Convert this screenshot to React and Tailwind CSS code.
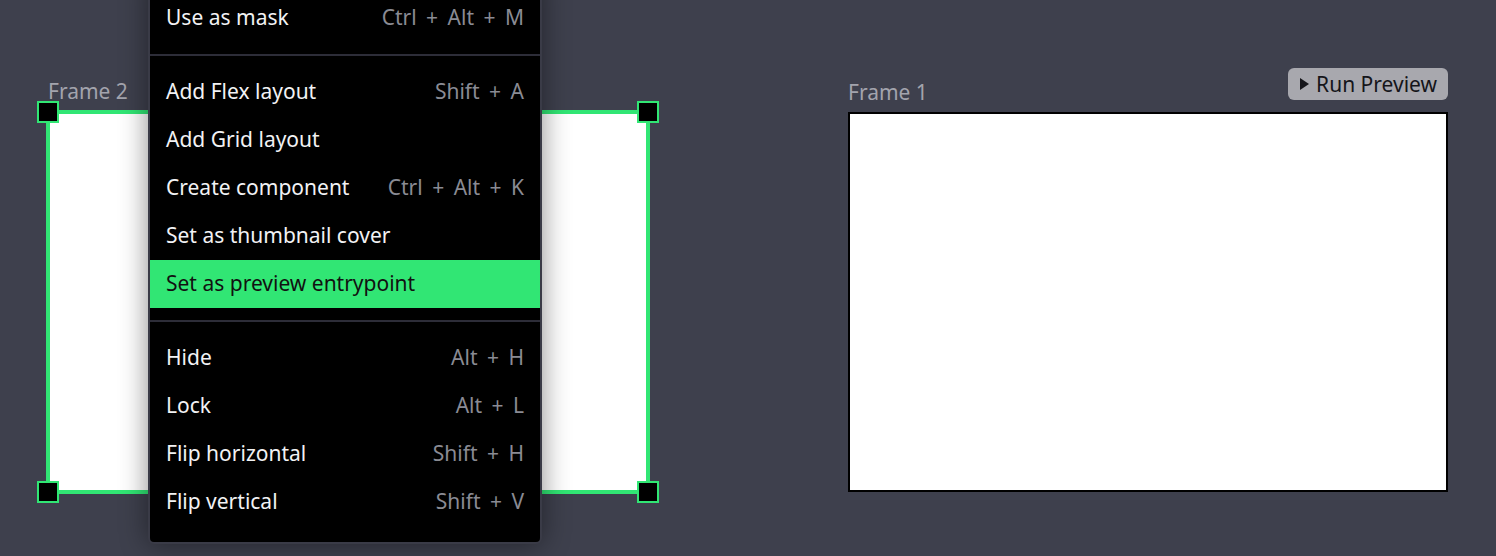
import React from 'react';

const font = { fontFamily: '"Noto Sans", "Open Sans", sans-serif' };

const menu = [
  { label: 'Use as mask', keys: 'Ctrl + Alt + M' },
  'sep',
  { label: 'Add Flex layout', keys: 'Shift + A' },
  { label: 'Add Grid layout' },
  { label: 'Create component', keys: 'Ctrl + Alt + K' },
  { label: 'Set as thumbnail cover' },
  { label: 'Set as preview entrypoint', active: true },
  'sep',
  { label: 'Hide', keys: 'Alt + H' },
  { label: 'Lock', keys: 'Alt + L' },
  { label: 'Flip horizontal', keys: 'Shift + H' },
  { label: 'Flip vertical', keys: 'Shift + V' },
];

// selection handle, sits over the frame corner
const Handle = ({ className }) => (
  <div className={`absolute w-[22px] h-[22px] bg-black border-2 border-[#31e674] ${className}`} />
);

const ContextMenu = () => (
  <div className="absolute left-[148px] top-[-24px] w-[394px] flex flex-col bg-black border-2 border-[#3a3b47] rounded-md py-4 shadow-[0_0_28px_rgba(0,0,0,0.45)]">
    {menu.map((item, i) =>
      item === 'sep' ? (
        <div key={i} className="my-3 h-[2px] bg-[#2d2d38]" />
      ) : (
        <div
          key={i}
          className={`h-12 px-4 flex items-center justify-between text-[21px] ${
            item.active ? 'bg-[#31e674] text-[#111111]' : 'text-[#f2f2f4]'
          }`}
        >
          <span>{item.label}</span>
          {item.keys && <span className="text-[#8a8b94] [word-spacing:4px]">{item.keys}</span>}
        </div>
      )
    )}
  </div>
);

const App = () => {
  return (
    <div className="relative w-[1496px] h-[556px] overflow-hidden bg-[#3e404d]" style={font}>
      {/* Frame 2 (selected) */}
      <div className="absolute left-[46px] top-[79px] flex flex-col gap-[7px]">
        <span className="pl-[2px] text-[21px] leading-6 text-[#a3a4ad]">Frame 2</span>
        <div className="relative w-[604px] h-[384px] bg-white border-4 border-[#31e674]">
          <Handle className="-left-[13px] -top-[13px]" />
          <Handle className="-right-[13px] -top-[13px]" />
          <Handle className="-left-[13px] -bottom-[13px]" />
          <Handle className="-right-[13px] -bottom-[13px]" />
        </div>
      </div>

      {/* Frame 1 */}
      <div className="absolute left-[848px] top-[68px] w-[600px] flex flex-col">
        <div className="h-[44px] flex justify-between">
          <span className="self-end mb-[8px] text-[21px] leading-6 text-[#a3a4ad]">Frame 1</span>
          <button className="h-8 pl-3 pr-[11px] rounded-md bg-[#a8a8ae] text-[#15151a] text-[21px] leading-6 flex items-center gap-[7px]">
            <svg width="9" height="12" viewBox="0 0 9 12">
              <path d="M0 0 L9 6 L0 12 Z" fill="#15151a" />
            </svg>
            Run Preview
          </button>
        </div>
        <div className="h-[380px] bg-white border-2 border-black" />
      </div>

      <ContextMenu />
    </div>
  );
};

export default App;
